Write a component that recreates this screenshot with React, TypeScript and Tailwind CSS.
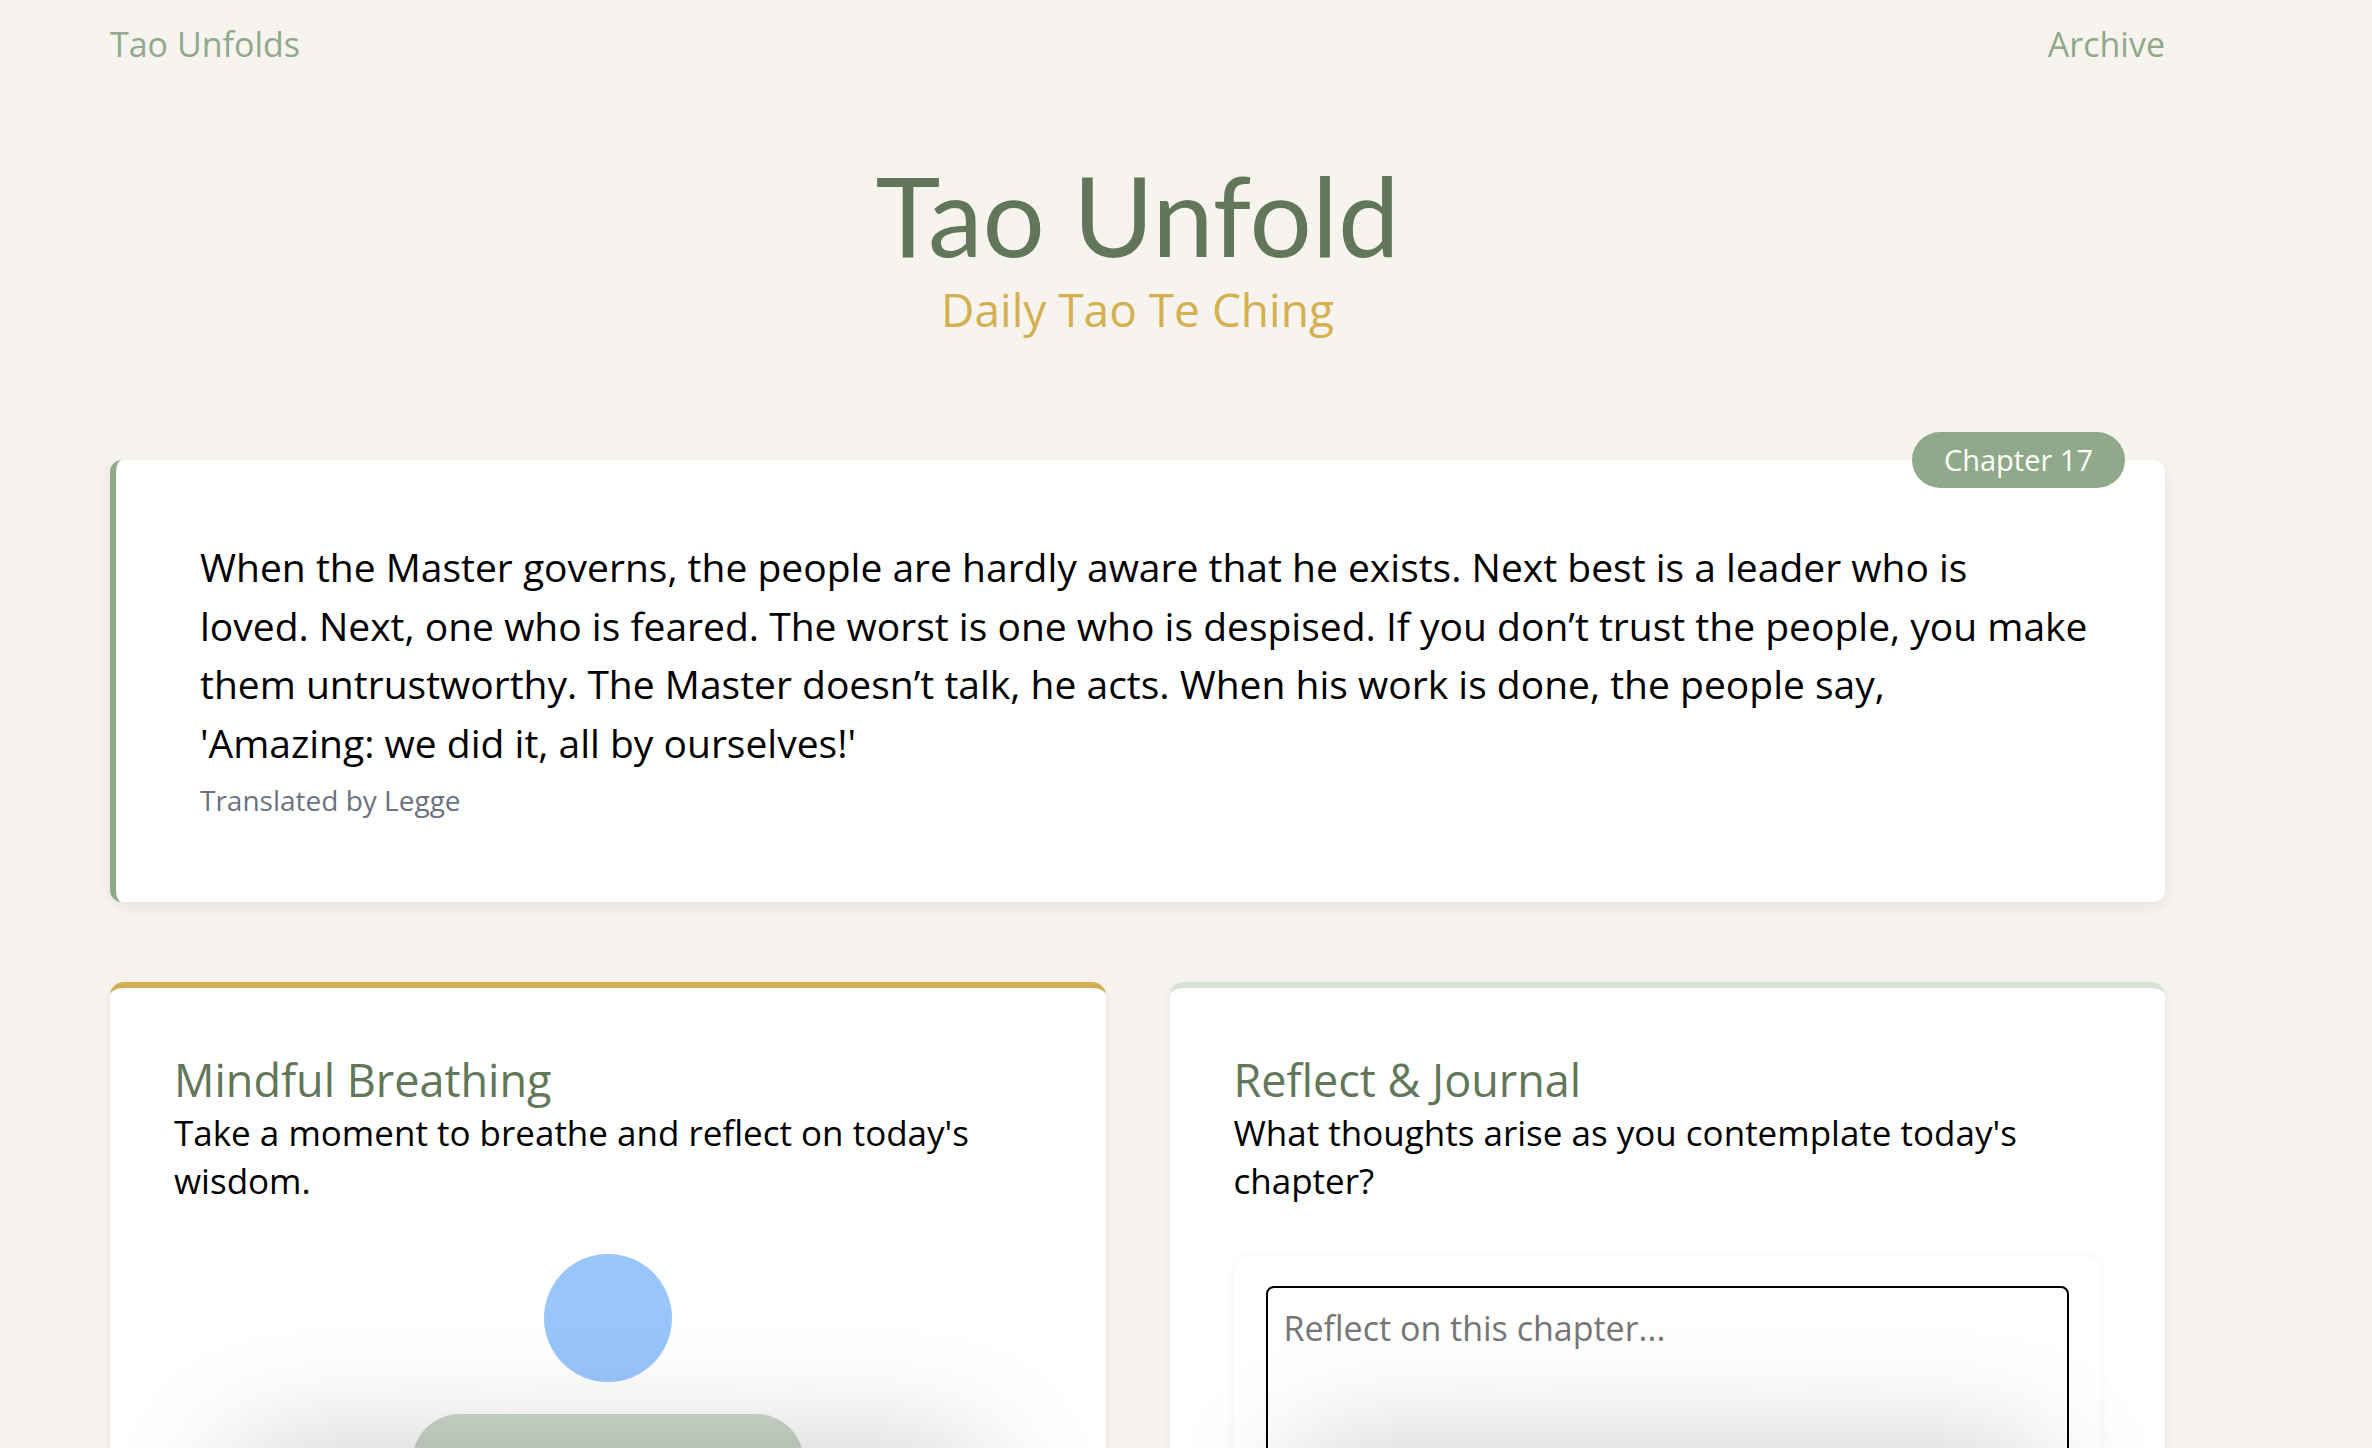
import React, { useState } from 'react';

// line breaks follow the original layout
const quoteLines = [
  'When the Master governs, the people are hardly aware that he exists. Next best is a leader who is',
  'loved. Next, one who is feared. The worst is one who is despised. If you don’t trust the people, you make',
  'them untrustworthy. The Master doesn’t talk, he acts. When his work is done, the people say,',
  "'Amazing: we did it, all by ourselves!'",
];

function BottomFade() {
  return (
    <div className="pointer-events-none absolute left-[150px] right-[150px] top-[490px] h-[200px] bg-[#e2e2e2] shadow-[0_0_130px_22px_rgba(0,0,0,0.24)]" />
  );
}

function BreathingCard() {
  return (
    <div className="relative bg-white rounded-[14px] border-t-[6px] border-[#d2b052] shadow-[0_2px_10px_rgba(0,0,0,0.06)] px-[64px] pt-[65px] pb-[64px]">
      <h2 className="text-[45px] leading-[54px] text-[#627759]">Mindful Breathing</h2>
      <p className="mt-[2px] text-[35px] leading-[48px] text-black">
        Take a moment to breathe and reflect on today's wisdom.
      </p>
      <div className="mt-[49px] flex flex-col items-center">
        <div className="w-[128px] h-[128px] rounded-full bg-[#99c5fd]" />
        <button aria-label="Start breathing" className="mt-[32px] w-[392px] h-[96px] rounded-full bg-[#cdd8cb]" />
      </div>
      <BottomFade />
    </div>
  );
}

function JournalCard() {
  const [text, setText] = useState('');
  return (
    <div className="relative bg-white rounded-[14px] border-t-[6px] border-[#d5e1d4] shadow-[0_2px_10px_rgba(0,0,0,0.06)] px-[64px] pt-[65px] pb-[64px]">
      <h2 className="text-[45px] leading-[54px] text-[#627759]">Reflect &amp; Journal</h2>
      <p className="mt-[2px] text-[35px] leading-[48px] text-black">
        What thoughts arise as you contemplate today's chapter?
      </p>
      <div className="mt-[51px] bg-white rounded-[16px] shadow-[0_0_10px_rgba(0,0,0,0.05)] px-[32px] py-[30px]">
        <textarea
          value={text}
          onChange={(e) => setText(e.target.value)}
          placeholder="Reflect on this chapter..."
          className="block w-full h-[300px] resize-none border-2 border-black rounded-[8px] px-[16px] py-[16px] text-[34px] leading-[48px] text-black placeholder:text-[#767676] outline-none"
        />
      </div>
      <BottomFade />
    </div>
  );
}

export default function App() {
  return (
    <div className="h-[1448px] overflow-hidden bg-[#f7f4ef] font-['Open_Sans',sans-serif]">
      <div className="ml-[110px] w-[2055px]">
        <nav className="h-[88px] flex items-center justify-between text-[34px] text-[#8fa98a]">
          <a href="#">Tao Unfolds</a>
          <a href="#">Archive</a>
        </nav>

        <header className="mt-[71px] text-center">
          <h1 className="font-['Lato',sans-serif] text-[110px] leading-none text-[#627759]">Tao Unfold</h1>
          <p className="mt-[13px] text-[46px] leading-[55px] text-[#d4b050]">Daily Tao Te Ching</p>
        </header>

        <section className="relative mt-[123px] bg-white rounded-[12px] border-l-[6px] border-[#8fa98a] shadow-[0_4px_14px_rgba(0,0,0,0.08)] pl-[84px] pr-[84px] pt-[78px] pb-[82px]">
          <span className="absolute -top-[28px] right-[40px] h-[56px] px-[32px] flex items-center rounded-full bg-[#8fa98a] text-white text-[29px]">
            Chapter 17
          </span>
          <p className="text-[39px] leading-[58.5px] text-black whitespace-nowrap">
            {quoteLines.map((line, i) => (
              <span key={i} className="block">
                {line}
              </span>
            ))}
          </p>
          <p className="mt-[8px] text-[28px] leading-[40px] text-[#6b7280]">Translated by Legge</p>
        </section>

        <div className="mt-[80px] grid grid-cols-2 gap-[64px]">
          <BreathingCard />
          <JournalCard />
        </div>
      </div>
    </div>
  );
}
